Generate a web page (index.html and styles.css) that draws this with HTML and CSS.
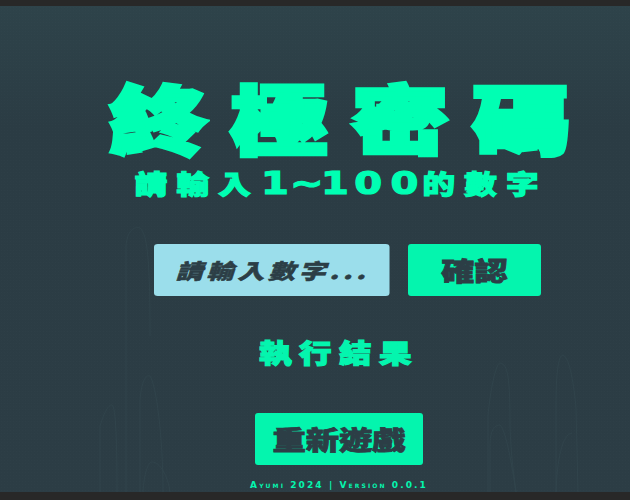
FILE: index.html
```html
<!DOCTYPE html>
<html lang="zh-Hant">
<head>
<meta charset="utf-8">
<title>終極密碼</title>
<link rel="stylesheet" href="styles.css">
</head>
<body>
<main class="stage">
  <svg class="decor" viewBox="0 0 630 486" aria-hidden="true">
    <g fill="none" stroke="#3a5158" stroke-width="1">
      <path d="M126 486V240C127 225 134 220 140 222C147 228 150 250 150 330"/>
      <path d="M100 486V420C103 410 108 398 112 399C116 400 117 440 117 486"/>
      <path d="M140 486V395C141 376 146 368 150 370C156 378 163 430 163 486"/>
      <path d="M143 486C144 468 148 456 152 456C160 456 168 470 170 486"/>
      <path d="M488 486V410C490 385 496 357 500 357C508 358 510 372 510 420C511 450 514 470 516 486"/>
      <path d="M490 486V440C490 425 494 419 500 419C506 424 512 460 516 486"/>
      <path d="M556 486V400C556 370 558 349 563 349C570 352 574 380 576 402L578 486"/>
      <path d="M556 486C557 455 562 428 572 427"/>
    </g>
  </svg>
  <h1 class="title"><span>終</span><span>極</span><span>密</span><span>碼</span></h1>
  <p class="subtitle">請輸入<span class="digits">1</span><span class="digits">~</span><span class="digits">1</span><span class="digits zero">0</span><span class="digits zero">0</span>的數字</p>
  <form class="guess">
    <div class="guess-field"><input class="guess-input" type="text" placeholder="請輸入數字..."></div>
    <button class="btn btn-confirm" type="button"><span>確認</span></button>
  </form>
  <p class="result">執行結果</p>
  <button class="btn btn-restart" type="button"><span>重新遊戲</span></button>
  <p class="credit">Ayumi 2024 | Version 0.0.1</p>
</main>
</body>
</html>
```
FILE: styles.css
```css
* { box-sizing: border-box; }
html, body { height: 100%; margin: 0; }
body {
  background: #282828;
  padding: 6px 0 8px;
  overflow: hidden;
  font-family: "Noto Sans CJK TC", "Noto Sans", sans-serif;
}
.stage {
  position: relative;
  height: 486px;
  padding-left: 48px;
  display: flex;
  flex-direction: column;
  align-items: center;
  background:
    radial-gradient(circle, rgba(255,255,255,.012) 1px, transparent 1px) 0 0 / 3px 3px,
    linear-gradient(#2e434a, #2b3c44 25%, #2c3d45);
}
.decor {
  position: absolute;
  inset: 0;
  width: 100%;
  height: 100%;
  opacity: .35;
}
.title, .subtitle, .guess, .result, .btn-restart, .credit { position: relative; }
.title {
  display: flex;
  gap: 47px;
  margin: 70px 0 0;
  height: 80px;
  color: #00ffb3;
  font-size: 74px;
  font-weight: 900;
  line-height: 80px;
  -webkit-text-stroke: 4.5px #00ffb3;
}
.title span {
  display: block;
  transform: scaleX(1.3);
}
.subtitle {
  display: flex;
  align-items: center;
  margin: 9px 0 0 5px;
  height: 36px;
  color: #00ffb3;
  font-size: 26px;
  font-weight: 900;
  letter-spacing: 7.4px;
  line-height: 36px;
  transform: scaleX(1.25);
  -webkit-text-stroke: 1.2px #00ffb3;
}
.digits {
  display: block;
  width: 24px;
  font-family: "DejaVu Sans", sans-serif;
  font-size: 32px;
  font-weight: 700;
  letter-spacing: 0;
  text-align: center;
}
.zero { width: 29px; }
.guess {
  display: flex;
  gap: 19px;
  margin: 43px 0 0 17px;
}
.guess-field { width: 235px; }
.guess-input {
  display: block;
  width: 184px;
  height: 52px;
  padding: 0 6px 0 17px;
  border: 0;
  border-radius: 3px;
  background: #9bdeeb;
  font-family: inherit;
  font-size: 21px;
  font-weight: 900;
  letter-spacing: 3px;
  font-style: italic;
  transform: scaleX(1.28);
  transform-origin: left center;
  -webkit-text-stroke: .5px #2c3e46;
}
.guess-input::placeholder { color: #2c3e46; opacity: 1; }
.btn {
  border: 0;
  border-radius: 3px;
  padding: 0;
  background: #04f5ae;
  color: #2c3e46;
  font-family: inherit;
  font-weight: 900;
  font-size: 26px;
  line-height: 1;
  -webkit-text-stroke: .8px #2c3e46;
}
.btn span {
  display: block;
  transform: scaleX(1.28);
}
.btn-confirm {
  width: 133px;
  height: 52px;
}
.result {
  margin: 36px 0 0;
  height: 40px;
  color: #04f5ae;
  font-size: 26px;
  font-weight: 900;
  letter-spacing: 6px;
  line-height: 40px;
  transform: scaleX(1.25);
  -webkit-text-stroke: 1.2px #04f5ae;
}
.btn-restart {
  margin: 41px 0 0;
  width: 168px;
  height: 52px;
}
.credit {
  margin: 14px 0 0;
  color: #04f5ae;
  font-family: "DejaVu Sans", sans-serif;
  font-size: 9px;
  font-weight: 700;
  font-variant: small-caps;
  letter-spacing: 2.1px;
  line-height: 12px;
}
```
